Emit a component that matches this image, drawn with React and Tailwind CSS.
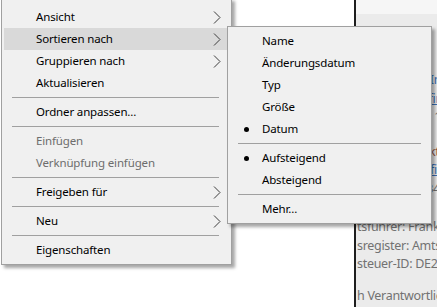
const mainItems = [
  { label: "Ansicht", sub: true },
  { label: "Sortieren nach", sub: true, active: true },
  { label: "Gruppieren nach", sub: true },
  { label: "Aktualisieren" },
  { sep: true },
  { label: "Ordner anpassen..." },
  { sep: true },
  { label: "Einfügen", disabled: true },
  { label: "Verknüpfung einfügen", disabled: true },
  { sep: true },
  { label: "Freigeben für", sub: true },
  { sep: true },
  { label: "Neu", sub: true },
  { sep: true },
  { label: "Eigenschaften" },
];

const sortItems = [
  { label: "Name" },
  { label: "Änderungsdatum" },
  { label: "Typ" },
  { label: "Größe" },
  { label: "Datum", checked: true },
  { sep: true },
  { label: "Aufsteigend", checked: true },
  { label: "Absteigend" },
  { sep: true },
  { label: "Mehr..." },
];

function Arrow() {
  return (
    <svg width="8" height="13" viewBox="0 0 8 13" className="shrink-0">
      <path d="M1 0.5 L7 6.5 L1 12.5" fill="none" stroke="#3c3c3c" strokeWidth="1" />
    </svg>
  );
}

function MainMenu() {
  return (
    <div className="absolute left-[1px] top-[-2px] w-[231px] border border-[#a0a0a0] bg-[#f0f0f0] pt-[7px] pb-[3px] pl-[2px] pr-[4px] shadow-[3px_3px_3px_rgba(0,0,0,0.35)]">
      {mainItems.map((item, i) =>
        item.sep ? (
          <div key={i} className="h-[7px] flex items-center px-[8px]">
            <div className="h-px w-full bg-[#a0a0a0]" />
          </div>
        ) : (
          <div
            key={i}
            className={
              "h-[22px] flex items-center justify-between pl-[32px] pr-[6px] " +
              (item.active ? "bg-[#d9d9d9] " : "") +
              (item.disabled ? "text-[#6d6d6d]" : "text-black")
            }
          >
            <span>{item.label}</span>
            {item.sub && <Arrow />}
          </div>
        )
      )}
    </div>
  );
}

function SortMenu() {
  return (
    <div className="absolute left-[227px] top-[26px] w-[205px] border border-[#a0a0a0] bg-[#f0f0f0] pt-[3px] pb-[3px] px-[2px] shadow-[3px_3px_3px_rgba(0,0,0,0.35)]">
      {sortItems.map((item, i) =>
        item.sep ? (
          <div key={i} className="h-[7px] flex items-center px-[8px]">
            <div className="h-px w-full bg-[#a0a0a0]" />
          </div>
        ) : (
          <div key={i} className="h-[22px] flex items-center text-black">
            <div className="w-[32px] flex justify-center pl-[1px]">
              {item.checked && <div className="w-[5px] h-[5px] rounded-full bg-black" />}
            </div>
            <span>{item.label}</span>
          </div>
        )
      )}
    </div>
  );
}

export default function App() {
  return (
    <div className="relative w-[437px] h-[307px] overflow-hidden bg-white font-['Noto_Sans',sans-serif] text-[11.5px] tracking-[-0.15px]">
      <div className="flex h-full">
        <div className="w-[354px] shrink-0 bg-white" />
        <div className="flex-1 min-w-0 overflow-hidden flex flex-col border-l-2 border-[#1e1e1e] shadow-[inset_8px_0_6px_-4px_rgba(0,0,0,0.18)]">
          <div className="h-[14px] bg-[#f6f6f6]" />
          <div className="flex-1 bg-[#ebebeb] pl-[1px] pt-[57px] text-[12.5px] leading-[18.5px] tracking-[-0.3px] text-[#727272] whitespace-nowrap">
            <div>
              <div className="text-[#3b6fb6]">Musterfirma Immobilien GmbH</div>
              <div className="text-[#3b6fb6] underline">www.musterfirma-immobilien.de</div>
              <div>Telefon: 0221 1234560</div>
            </div>
            <div className="mt-[16px]">
              <div className="text-[#9a5b4a]">E-Mail: kontakt@musterfirma.de</div>
              <div className="text-[#3b6fb6] underline">info@musterfirma-immobilien.org</div>
              <div>Fax: 0221 1234562</div>
            </div>
            <div className="mt-[20px]">
              <div>tsführer: Frank Muster</div>
              <div>sregister: Amtsgericht Köln</div>
              <div>steuer-ID: DE276543210</div>
            </div>
            <div className="mt-[13px]">
              <div>h Verantwortlicher</div>
            </div>
          </div>
        </div>
      </div>
      <MainMenu />
      <SortMenu />
    </div>
  );
}
